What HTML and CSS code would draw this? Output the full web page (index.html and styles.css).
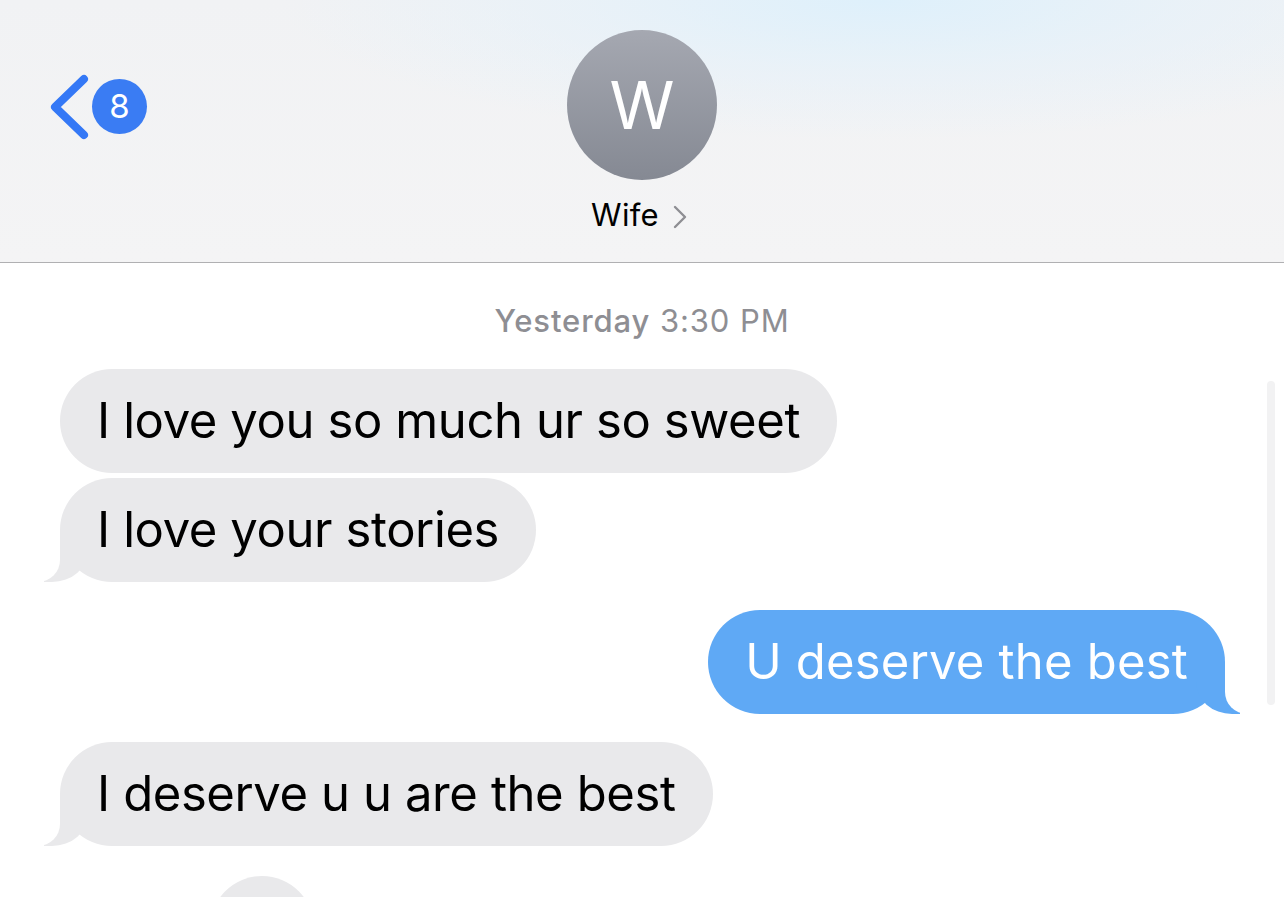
FILE: index.html
```html
<!DOCTYPE html>
<html lang="en">
<head>
<meta charset="utf-8">
<title>Wife</title>
<link rel="stylesheet" href="styles.css">
</head>
<body>
<div class="screen">
  <header class="nav">
    <div class="nav-left">
      <a class="back" href="#">
        <svg class="back-chevron" width="40" height="66" viewBox="0 0 40 66" aria-hidden="true">
          <path d="M34 5 L5 33 L34 61" fill="none" stroke="#3478f6" stroke-width="8" stroke-linecap="round" stroke-linejoin="round"/>
        </svg>
        <span class="badge">8</span>
      </a>
    </div>
    <div class="contact">
      <div class="avatar">W</div>
      <div class="name">Wife
        <svg class="name-chevron" width="14" height="24" viewBox="0 0 14 24" aria-hidden="true">
          <path d="M2 2 L12 12 L2 22" fill="none" stroke="#8e8e93" stroke-width="2.4" stroke-linecap="round" stroke-linejoin="round"/>
        </svg>
      </div>
    </div>
    <div class="nav-right"></div>
  </header>

  <main class="thread">
    <div class="stamp"><span class="stamp-day">Yesterday</span> 3:30 PM</div>

    <div class="row them first"><div class="bubble gray">I love you so much ur so sweet</div></div>
    <div class="row them tight"><div class="bubble gray tail-left">I love your stories</div></div>
    <div class="row me"><div class="bubble blue tail-right">U deserve the best</div></div>
    <div class="row them"><div class="bubble gray tail-left">I deserve u u are the best</div></div>
    <div class="row them next"><div class="bubble gray partial"></div></div>
  </main>

  <div class="scrollbar"></div>
</div>
</body>
</html>
```

FILE: styles.css
```css
* { box-sizing: border-box; }

html, body {
  margin: 0;
  padding: 0;
  background: #ffffff;
}

body {
  font-family: "Inter", "Roboto", "Liberation Sans", sans-serif;
  color: #000;
  overflow: hidden;
}

.screen {
  position: relative;
  width: 1284px;
  height: 897px;
  overflow: hidden;
  background: #ffffff;
}

/* ---------- header ---------- */
.nav {
  height: 263px;
  display: grid;
  grid-template-columns: 1fr auto 1fr;
  border-bottom: 1px solid #b0b0b2;
  background:
    radial-gradient(ellipse 600px 140px at 880px 0px, rgba(222, 240, 251, 1) 0%, rgba(228, 241, 250, 0.6) 50%, rgba(240, 242, 245, 0) 100%),
    linear-gradient(180deg, #f1f2f4 0%, #f4f4f5 100%);
}

.nav-left {
  padding: 74px 0 0 50px;
}

.back {
  display: inline-flex;
  align-items: flex-start;
  text-decoration: none;
}

.back-chevron {
  display: block;
}

.badge {
  width: 55px;
  height: 55px;
  margin-left: 2px;
  margin-top: 5px;
  border-radius: 50%;
  background: #3a7cf3;
  color: #fff;
  font-size: 33px;
  line-height: 55px;
  text-align: center;
  font-weight: 400;
}

.contact {
  display: flex;
  flex-direction: column;
  align-items: center;
  padding-top: 30px;
}

.avatar {
  width: 150px;
  height: 150px;
  border-radius: 50%;
  background: linear-gradient(180deg, #a5a8b1 0%, #858993 100%);
  color: #fff;
  font-size: 66px;
  font-weight: 400;
  line-height: 150px;
  text-align: center;
}

.name {
  margin-top: 17px;
  margin-left: -6px;
  font-size: 31px;
  line-height: 36px;
  display: flex;
  align-items: center;
  gap: 14px;
  color: #000;
  letter-spacing: 0.3px;
}

.name-chevron {
  display: block;
  margin-top: 3px;
}

/* ---------- thread ---------- */
.thread {
  display: flex;
  flex-direction: column;
}

.stamp {
  margin-top: 40px;
  text-align: center;
  font-size: 31px;
  line-height: 36px;
  color: #8e8e93;
  letter-spacing: 0.9px;
}

.stamp-day {
  font-weight: 500;
}

.row {
  display: flex;
  margin-top: 28px;
}

.row.first { margin-top: 30px; }
.row.tight { margin-top: 5px; }
.row.next { margin-top: 30px; }

.row.them { justify-content: flex-start; padding-left: 60px; }
.row.me { justify-content: flex-end; padding-right: 59px; }

.bubble {
  position: relative;
  height: 104px;
  line-height: 104px;
  padding: 0 37px;
  border-radius: 52px;
  font-size: 49px;
  letter-spacing: -0.4px;
  white-space: nowrap;
}

.bubble.gray { background: #e9e9eb; color: #000; }
.bubble.blue { background: #5fa9f5; color: #fff; letter-spacing: 0.2px; }

/* tails */
.tail-left::before,
.tail-left::after,
.tail-right::before,
.tail-right::after {
  content: "";
  position: absolute;
  bottom: 0;
  height: 52px;
}

.tail-left::before {
  left: -16px;
  width: 44px;
  background: #e9e9eb;
  border-bottom-right-radius: 36px 32px;
}

.tail-left::after {
  left: -56px;
  width: 56px;
  background: #ffffff;
  border-bottom-right-radius: 22px;
}

.tail-right::before {
  right: -15px;
  width: 44px;
  background: #5fa9f5;
  border-bottom-left-radius: 36px 32px;
}

.tail-right::after {
  right: -56px;
  width: 56px;
  background: #ffffff;
  border-bottom-left-radius: 22px;
}

.bubble.partial {
  width: 104px;
  margin-left: 150px;
  padding: 0;
}

/* scroll indicator */
.scrollbar {
  position: absolute;
  left: 1267px;
  top: 381px;
  width: 8px;
  height: 324px;
  border-radius: 4px;
  background: #f2f2f3;
}
```
